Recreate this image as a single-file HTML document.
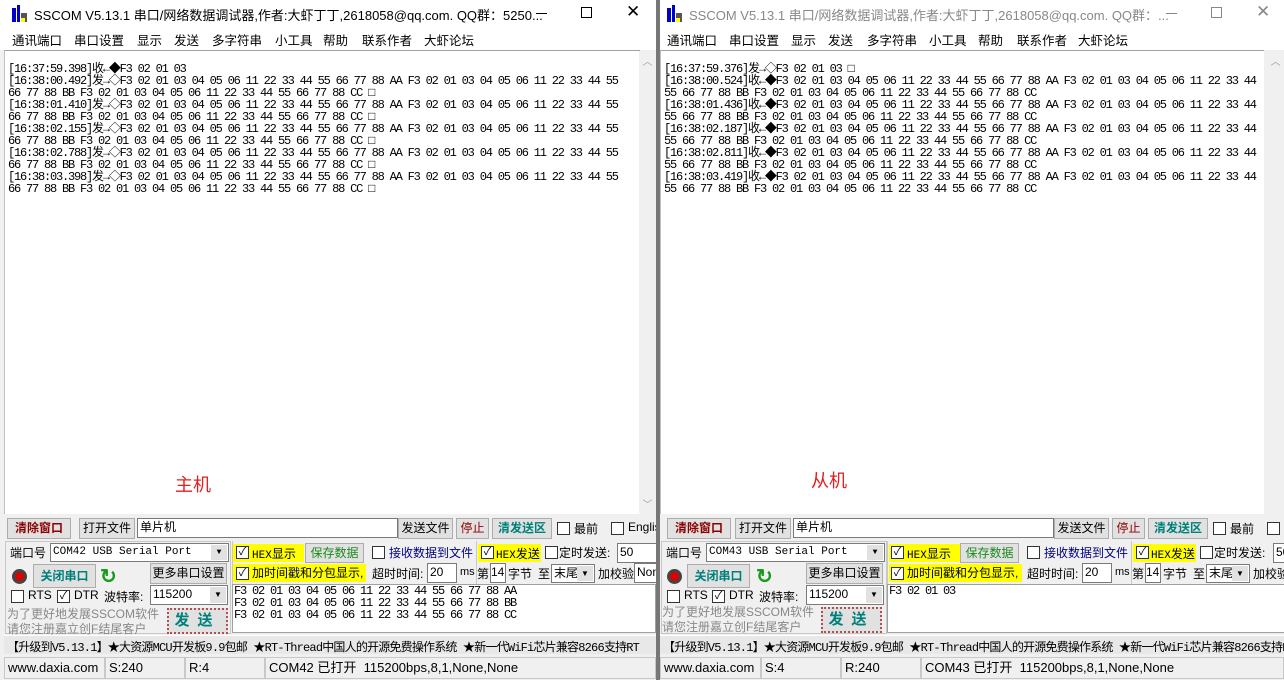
<!DOCTYPE html>
<html><head><meta charset="utf-8"><style>
*{margin:0;padding:0;box-sizing:border-box}
body{width:1284px;height:680px;overflow:hidden;background:#6e6e6e;font-family:"Liberation Sans","Noto Sans CJK SC",sans-serif;font-size:12px;color:#000;position:relative}
.win{position:absolute;top:0;height:680px;background:#f0f0f0;overflow:hidden}
.a{position:absolute;white-space:nowrap}
.title{left:0;top:0;right:0;height:28px;background:#fff}
.menu{left:0;top:28px;right:0;height:22px;background:#fff;font-size:12.5px}
.menu span{position:absolute;top:2px}
.log{left:4px;top:50px;height:464px;background:#fff;border-top:1px solid #a0a0a0;border-left:1px solid #c0c0c0}
.logt{position:absolute;left:3px;top:12px;font-family:"Liberation Mono","Noto Sans CJK SC",monospace;font-size:12px;letter-spacing:-1.2px;line-height:12px;white-space:pre}
.sb{top:51px;width:17px;height:462px;background:#f0f0f0;color:#a0a0a0;font-size:10px;text-align:center}
.btn{position:absolute;background:#e1e1e1;border:1px solid #adadad;text-align:center;font-size:12px;line-height:18px;white-space:nowrap;overflow:hidden}
.inp{position:absolute;background:#fff;border:1px solid #7a7a7a;font-size:12px;padding-left:2px;line-height:17px;white-space:nowrap;overflow:hidden}
.cb{position:absolute;width:13px;height:13px;border:1px solid #333;background:#fff;font-size:11px;line-height:11px;text-align:center}
.lbl{position:absolute;font-size:12px;white-space:nowrap}
.mono{font-family:"Liberation Mono","Noto Sans CJK SC",monospace}
.yel{position:absolute;background:#ff0}
.dd{position:absolute;right:1px;top:1px;width:16px;bottom:1px;background:#e1e1e1;font-size:8px;text-align:center;line-height:16px}
.stat{position:absolute;top:657px;height:22px;border:1px solid #c8c8c8;background:#f0f0f0;font-size:13px;line-height:20px;padding-left:3px}
.min{position:absolute;top:13px;width:11px;height:1px;background:#000}
</style></head><body>

<!-- LEFT WINDOW -->
<div class="win" style="left:0;width:656px">
 <div class="a title"></div>
 <svg class="a" style="left:12px;top:5px" width="16" height="18"><rect x="0" y="3" width="4" height="14" fill="#0000c8"/><rect x="5" y="0" width="3" height="17" fill="#0000c8"/><rect x="9" y="8" width="6" height="9" fill="#555"/><rect x="9" y="13" width="4" height="4" fill="#ff0"/></svg>
 <div class="a" style="left:34px;top:5px;font-size:13px">SSCOM V5.13.1 串口/网络数据调试器,作者:大虾丁丁,2618058@qq.com. QQ群：5250...</div>
 <div class="min" style="left:536px"></div>
 <div class="a" style="left:581px;top:7px;width:11px;height:11px;border:1px solid #000"></div>
 <div class="a" style="left:626px;top:2px;font-size:17px">✕</div>
 <div class="a menu"><span style="left:12px">通讯端口</span><span style="left:74px">串口设置</span><span style="left:137px">显示</span><span style="left:174px">发送</span><span style="left:212px">多字符串</span><span style="left:275px">小工具</span><span style="left:323px">帮助</span><span style="left:362px">联系作者</span><span style="left:424px">大虾论坛</span></div>
 <div class="a log" style="width:636px"><div class="logt">[16:37:59.398]收←◆F3 02 01 03
[16:38:00.492]发→◇F3 02 01 03 04 05 06 11 22 33 44 55 66 77 88 AA F3 02 01 03 04 05 06 11 22 33 44 55
66 77 88 BB F3 02 01 03 04 05 06 11 22 33 44 55 66 77 88 CC □
[16:38:01.410]发→◇F3 02 01 03 04 05 06 11 22 33 44 55 66 77 88 AA F3 02 01 03 04 05 06 11 22 33 44 55
66 77 88 BB F3 02 01 03 04 05 06 11 22 33 44 55 66 77 88 CC □
[16:38:02.155]发→◇F3 02 01 03 04 05 06 11 22 33 44 55 66 77 88 AA F3 02 01 03 04 05 06 11 22 33 44 55
66 77 88 BB F3 02 01 03 04 05 06 11 22 33 44 55 66 77 88 CC □
[16:38:02.788]发→◇F3 02 01 03 04 05 06 11 22 33 44 55 66 77 88 AA F3 02 01 03 04 05 06 11 22 33 44 55
66 77 88 BB F3 02 01 03 04 05 06 11 22 33 44 55 66 77 88 CC □
[16:38:03.398]发→◇F3 02 01 03 04 05 06 11 22 33 44 55 66 77 88 AA F3 02 01 03 04 05 06 11 22 33 44 55
66 77 88 BB F3 02 01 03 04 05 06 11 22 33 44 55 66 77 88 CC □</div>
  <div class="a" style="left:170px;top:420px;color:#e02020;font-size:18px">主机</div></div>
 <div class="a sb" style="left:639px"><div style="margin-top:2px">︿</div><div style="position:absolute;bottom:2px;width:17px">﹀</div></div>

 <div class="btn" style="left:7px;top:518px;width:64px;height:21px;color:#8b0000;font-weight:bold">清除窗口</div>
 <div class="btn" style="left:79px;top:518px;width:56px;height:21px">打开文件</div>
 <div class="inp" style="left:137px;top:518px;width:261px;height:20px">单片机</div>
 <div class="btn" style="left:398px;top:518px;width:55px;height:21px">发送文件</div>
 <div class="btn" style="left:456px;top:518px;width:33px;height:21px;color:#8b0000">停止</div>
 <div class="btn" style="left:492px;top:518px;width:60px;height:21px;color:#00807a;font-weight:bold">清发送区</div>
 <div class="cb" style="left:557px;top:522px"></div><div class="lbl" style="left:574px;top:520px">最前</div>
 <div class="cb" style="left:611px;top:522px"></div><div class="lbl" style="left:628px;top:520px">English</div>

 <div class="a" style="left:5px;top:541px;width:226px;height:93px;border:1px solid #c8c8c8"></div>
 <div class="lbl" style="left:10px;top:544px">端口号</div>
 <div class="inp mono" style="left:50px;top:543px;width:179px;height:19px;font-size:11px">COM42 USB Serial Port<div class="dd">▼</div></div>
 <div class="a" style="left:12px;top:569px;width:15px;height:15px;border-radius:50%;background:#d00;border:3px solid #444"></div>
 <div class="btn" style="left:33px;top:564px;width:63px;height:24px;color:#00807a;font-weight:bold;line-height:22px">关闭串口</div>
 <div class="a" style="left:100px;top:564px;color:#1a9a1a;font-size:20px;font-weight:bold">↻</div>
 <div class="btn" style="left:150px;top:563px;width:77px;height:21px">更多串口设置</div>
 <div class="cb" style="left:11px;top:590px"></div><div class="lbl" style="left:28px;top:588px">RTS</div>
 <div class="cb" style="left:57px;top:590px">✓</div><div class="lbl" style="left:74px;top:588px">DTR</div>
 <div class="lbl" style="left:104px;top:588px">波特率:</div>
 <div class="inp" style="left:150px;top:585px;width:78px;height:20px">115200<div class="dd">▼</div></div>
 <div class="lbl" style="left:7px;top:607px;color:#888;line-height:15px">为了更好地发展SSCOM软件<br>请您注册嘉立创F结尾客户</div>
 <div class="btn" style="left:167px;top:608px;width:61px;height:26px;border:2px dotted #b05050;color:#00807a;font-weight:bold;font-size:15px;line-height:22px;letter-spacing:8px">发送</div>

 <div class="a" style="left:232px;top:541px;width:1px;height:43px;background:#c8c8c8"></div>
 <div class="yel" style="left:233px;top:544px;width:71px;height:18px"></div>
 <div class="cb" style="left:236px;top:546px">✓</div><div class="lbl mono" style="left:252px;top:545px;font-size:11px">HEX<span style="font-family:'Noto Sans CJK SC';font-size:12px">显示</span></div>
 <div class="btn" style="left:305px;top:543px;width:59px;height:20px;color:#1a8a1a">保存数据</div>
 <div class="cb" style="left:372px;top:546px"></div><div class="lbl" style="left:389px;top:544px;color:#000080">接收数据到文件</div>
 <div class="a" style="left:476px;top:541px;width:1px;height:43px;background:#c8c8c8"></div>
 <div class="yel" style="left:478px;top:544px;width:63px;height:18px"></div>
 <div class="cb" style="left:481px;top:546px">✓</div><div class="lbl mono" style="left:496px;top:545px;font-size:11px">HEX<span style="font-family:'Noto Sans CJK SC';font-size:12px">发送</span></div>
 <div class="cb" style="left:545px;top:546px"></div><div class="lbl" style="left:559px;top:544px">定时发送:</div>
 <div class="inp" style="left:617px;top:543px;width:40px;height:20px">50</div>
 <div class="yel" style="left:233px;top:564px;width:133px;height:18px"></div>
 <div class="cb" style="left:236px;top:567px">✓</div><div class="lbl" style="left:252px;top:564px">加时间戳和分包显示,</div>
 <div class="lbl" style="left:372px;top:565px">超时时间:</div>
 <div class="inp" style="left:427px;top:563px;width:30px;height:20px">20</div>
 <div class="lbl" style="left:460px;top:566px;font-size:11px">ms</div>
 <div class="lbl" style="left:477px;top:565px">第</div>
 <div class="inp" style="left:490px;top:563px;width:16px;height:20px;padding:0;font-size:12px">14</div>
 <div class="lbl" style="left:508px;top:565px">字节</div><div class="lbl" style="left:538px;top:565px">至</div>
 <div class="inp" style="left:551px;top:564px;width:44px;height:19px">末尾<div class="dd">▼</div></div>
 <div class="lbl" style="left:598px;top:565px">加校验</div>
 <div class="inp" style="left:634px;top:563px;width:30px;height:20px">None</div>
 <div class="a" style="left:232px;top:584px;width:424px;height:49px;background:#fff;border:1px solid #a0a0a0"><div class="logt" style="top:0;left:1px">F3 02 01 03 04 05 06 11 22 33 44 55 66 77 88 AA
F3 02 01 03 04 05 06 11 22 33 44 55 66 77 88 BB
F3 02 01 03 04 05 06 11 22 33 44 55 66 77 88 CC</div></div>
 <div class="a" style="left:4px;top:635px;width:652px;height:19px;background:#e8e8e8;border-top:1px solid #fff"><div class="a mono" style="left:3px;top:2px;font-size:12px;letter-spacing:-0.8px">【升级到V5.13.1】★大资源MCU开发板9.9包邮 ★RT-Thread中国人的开源免费操作系统 ★新一代WiFi芯片兼容8266支持RT</div></div>
 <div class="stat" style="left:4px;width:101px">www.daxia.com</div>
 <div class="stat" style="left:105px;width:80px">S:240</div>
 <div class="stat" style="left:185px;width:80px">R:4</div>
 <div class="stat" style="left:265px;width:391px">COM42 已打开&nbsp; 115200bps,8,1,None,None</div>
</div>
<div class="a" style="left:656px;top:0;width:4px;height:680px;background:#777"></div>

<!-- RIGHT WINDOW -->
<div class="win" style="left:660px;width:624px">
 <div class="a title"></div>
 <svg class="a" style="left:7px;top:5px" width="16" height="18"><rect x="0" y="3" width="4" height="14" fill="#0000c8"/><rect x="5" y="0" width="3" height="17" fill="#0000c8"/><rect x="9" y="8" width="6" height="9" fill="#555"/><rect x="9" y="13" width="4" height="4" fill="#ff0"/></svg>
 <div class="a" style="left:29px;top:5px;font-size:13px;color:#888">SSCOM V5.13.1 串口/网络数据调试器,作者:大虾丁丁,2618058@qq.com. QQ群：...</div>
 <div class="min" style="left:506px;background:#888"></div>
 <div class="a" style="left:551px;top:7px;width:11px;height:11px;border:1px solid #888"></div>
 <div class="a" style="left:596px;top:2px;font-size:17px;color:#888">✕</div>
 <div class="a menu"><span style="left:7px">通讯端口</span><span style="left:69px">串口设置</span><span style="left:131px">显示</span><span style="left:168px">发送</span><span style="left:207px">多字符串</span><span style="left:269px">小工具</span><span style="left:318px">帮助</span><span style="left:357px">联系作者</span><span style="left:418px">大虾论坛</span></div>
 <div class="a log" style="width:604px;left:0"><div class="logt">[16:37:59.376]发→◇F3 02 01 03 □
[16:38:00.524]收←◆F3 02 01 03 04 05 06 11 22 33 44 55 66 77 88 AA F3 02 01 03 04 05 06 11 22 33 44
55 66 77 88 BB F3 02 01 03 04 05 06 11 22 33 44 55 66 77 88 CC
[16:38:01.436]收←◆F3 02 01 03 04 05 06 11 22 33 44 55 66 77 88 AA F3 02 01 03 04 05 06 11 22 33 44
55 66 77 88 BB F3 02 01 03 04 05 06 11 22 33 44 55 66 77 88 CC
[16:38:02.187]收←◆F3 02 01 03 04 05 06 11 22 33 44 55 66 77 88 AA F3 02 01 03 04 05 06 11 22 33 44
55 66 77 88 BB F3 02 01 03 04 05 06 11 22 33 44 55 66 77 88 CC
[16:38:02.811]收←◆F3 02 01 03 04 05 06 11 22 33 44 55 66 77 88 AA F3 02 01 03 04 05 06 11 22 33 44
55 66 77 88 BB F3 02 01 03 04 05 06 11 22 33 44 55 66 77 88 CC
[16:38:03.419]收←◆F3 02 01 03 04 05 06 11 22 33 44 55 66 77 88 AA F3 02 01 03 04 05 06 11 22 33 44
55 66 77 88 BB F3 02 01 03 04 05 06 11 22 33 44 55 66 77 88 CC</div>
  <div class="a" style="left:150px;top:416px;color:#e02020;font-size:18px">从机</div></div>
 <div class="a sb" style="left:607px"><div style="margin-top:2px">︿</div></div>

 <div class="btn" style="left:7px;top:518px;width:64px;height:21px;color:#8b0000;font-weight:bold">清除窗口</div>
 <div class="btn" style="left:75px;top:518px;width:56px;height:21px">打开文件</div>
 <div class="inp" style="left:133px;top:518px;width:261px;height:20px">单片机</div>
 <div class="btn" style="left:394px;top:518px;width:55px;height:21px">发送文件</div>
 <div class="btn" style="left:452px;top:518px;width:33px;height:21px;color:#8b0000">停止</div>
 <div class="btn" style="left:488px;top:518px;width:60px;height:21px;color:#00807a;font-weight:bold">清发送区</div>
 <div class="cb" style="left:553px;top:522px"></div><div class="lbl" style="left:570px;top:520px">最前</div>
 <div class="cb" style="left:607px;top:522px"></div>

 <div class="a" style="left:1px;top:541px;width:226px;height:93px;border:1px solid #c8c8c8"></div>
 <div class="lbl" style="left:6px;top:544px">端口号</div>
 <div class="inp mono" style="left:46px;top:543px;width:179px;height:19px;font-size:11px">COM43 USB Serial Port<div class="dd">▼</div></div>
 <div class="a" style="left:7px;top:569px;width:15px;height:15px;border-radius:50%;background:#d00;border:3px solid #444"></div>
 <div class="btn" style="left:27px;top:564px;width:63px;height:24px;color:#00807a;font-weight:bold;line-height:22px">关闭串口</div>
 <div class="a" style="left:96px;top:564px;color:#1a9a1a;font-size:20px;font-weight:bold">↻</div>
 <div class="btn" style="left:146px;top:563px;width:77px;height:21px">更多串口设置</div>
 <div class="cb" style="left:7px;top:590px"></div><div class="lbl" style="left:24px;top:588px">RTS</div>
 <div class="cb" style="left:52px;top:590px">✓</div><div class="lbl" style="left:69px;top:588px">DTR</div>
 <div class="lbl" style="left:99px;top:588px">波特率:</div>
 <div class="inp" style="left:146px;top:585px;width:78px;height:20px">115200<div class="dd">▼</div></div>
 <div class="lbl" style="left:2px;top:605px;color:#888;line-height:15px">为了更好地发展SSCOM软件<br>请您注册嘉立创F结尾客户</div>
 <div class="btn" style="left:161px;top:607px;width:61px;height:26px;border:2px dotted #b05050;color:#00807a;font-weight:bold;font-size:15px;line-height:22px;letter-spacing:8px">发送</div>

 <div class="a" style="left:227px;top:541px;width:1px;height:43px;background:#c8c8c8"></div>
 <div class="yel" style="left:229px;top:544px;width:71px;height:18px"></div>
 <div class="cb" style="left:231px;top:546px">✓</div><div class="lbl mono" style="left:247px;top:545px;font-size:11px">HEX<span style="font-family:'Noto Sans CJK SC';font-size:12px">显示</span></div>
 <div class="btn" style="left:300px;top:543px;width:59px;height:20px;color:#1a8a1a">保存数据</div>
 <div class="cb" style="left:367px;top:546px"></div><div class="lbl" style="left:384px;top:544px;color:#000080">接收数据到文件</div>
 <div class="a" style="left:471px;top:541px;width:1px;height:43px;background:#c8c8c8"></div>
 <div class="yel" style="left:473px;top:544px;width:63px;height:18px"></div>
 <div class="cb" style="left:476px;top:546px">✓</div><div class="lbl mono" style="left:491px;top:545px;font-size:11px">HEX<span style="font-family:'Noto Sans CJK SC';font-size:12px">发送</span></div>
 <div class="cb" style="left:540px;top:546px"></div><div class="lbl" style="left:554px;top:544px">定时发送:</div>
 <div class="inp" style="left:613px;top:543px;width:40px;height:20px">50</div>
 <div class="yel" style="left:229px;top:564px;width:133px;height:18px"></div>
 <div class="cb" style="left:231px;top:567px">✓</div><div class="lbl" style="left:247px;top:564px">加时间戳和分包显示,</div>
 <div class="lbl" style="left:367px;top:565px">超时时间:</div>
 <div class="inp" style="left:422px;top:563px;width:30px;height:20px">20</div>
 <div class="lbl" style="left:455px;top:566px;font-size:11px">ms</div>
 <div class="lbl" style="left:472px;top:565px">第</div>
 <div class="inp" style="left:485px;top:563px;width:16px;height:20px;padding:0;font-size:12px">14</div>
 <div class="lbl" style="left:503px;top:565px">字节</div><div class="lbl" style="left:533px;top:565px">至</div>
 <div class="inp" style="left:546px;top:564px;width:44px;height:19px">末尾<div class="dd">▼</div></div>
 <div class="lbl" style="left:593px;top:565px">加校验</div>
 <div class="a" style="left:227px;top:584px;width:400px;height:49px;background:#fff;border:1px solid #a0a0a0"><div class="logt" style="top:0;left:1px">F3 02 01 03</div></div>
 <div class="a" style="left:0;top:635px;width:624px;height:19px;background:#e8e8e8;border-top:1px solid #fff"><div class="a mono" style="left:3px;top:2px;font-size:12px;letter-spacing:-0.8px">【升级到V5.13.1】★大资源MCU开发板9.9包邮 ★RT-Thread中国人的开源免费操作系统 ★新一代WiFi芯片兼容8266支持RT</div></div>
 <div class="stat" style="left:0;width:101px">www.daxia.com</div>
 <div class="stat" style="left:101px;width:80px">S:4</div>
 <div class="stat" style="left:181px;width:80px">R:240</div>
 <div class="stat" style="left:261px;width:363px">COM43 已打开&nbsp; 115200bps,8,1,None,None</div>
</div>
</body></html>
